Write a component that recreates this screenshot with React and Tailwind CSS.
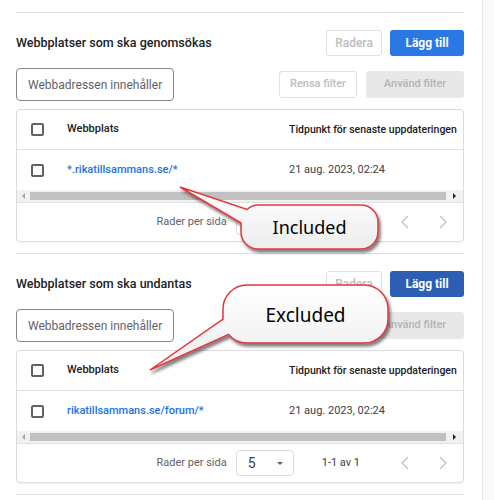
import React from "react";

const ROWS_INCLUDED = [{ url: "*.rikatillsammans.se/*", updated: "21 aug. 2023, 02:24" }];
const ROWS_EXCLUDED = [{ url: "rikatillsammans.se/forum/*", updated: "21 aug. 2023, 02:24" }];

function Checkbox() {
    return <div className="w-[13px] h-[13px] border-2 border-[#5f6368] rounded-[2px] bg-white" />;
}

function Chevron({ dir }) {
    return (
        <svg width="10" height="14" viewBox="0 0 10 14" fill="none" stroke="#bdc1c6" strokeWidth="1.3">
            {dir === "left" ? <path d="M8 1 L2 7 L8 13" /> : <path d="M2 1 L8 7 L2 13" />}
        </svg>
    );
}

function ScrollBar() {
    return (
        <div className="flex h-[12px] bg-[#f1f1f1]">
            <div className="w-[13px] flex items-center justify-center">
                <div className="w-0 h-0 border-y-[3px] border-y-transparent border-r-[3px] border-r-[#a3a3a3]" />
            </div>
            <div className="flex-1 my-[2px] bg-[#c1c1c1]" />
            <div className="w-[17px] flex items-center justify-center">
                <div className="w-0 h-0 border-y-[3px] border-y-transparent border-l-[3px] border-l-[#202124]" />
            </div>
        </div>
    );
}

function SiteTable({ rows }) {
    return (
        <div className="mt-2 border border-[#dadce0] rounded-[4px] shadow-[0_1px_2px_rgba(0,0,0,0.05)] overflow-hidden bg-white">
            {/* Header */}
            <div className="flex items-center h-[40px] border-b border-[#e0e0e0] text-[10.5px] font-medium text-[#202124]">
                <div className="w-[50px] pl-[14px]"><Checkbox /></div>
                <div className="w-[222px] text-[11px]">Webbplats</div>
                <div className="flex-1 whitespace-nowrap">Tidpunkt för senaste uppdateringen</div>
            </div>

            {/* Rows */}
            {rows.map((row) => (
                <div key={row.url} className="flex items-center h-[40px] text-[11px]">
                    <div className="w-[50px] pl-[14px]"><Checkbox /></div>
                    <div className="w-[222px] text-[#1a73e8] font-medium">{row.url}</div>
                    <div className="flex-1 text-[#3c4043]">{row.updated}</div>
                </div>
            ))}

            <ScrollBar />

            {/* Pagination */}
            <div className="flex items-center justify-end h-[39px] pr-[15px] border-t border-[#e0e0e0] text-[11px] text-[#5f6368]">
                <span>Rader per sida</span>
                <div className="ml-[9px] w-[58px] h-[26px] flex items-center justify-between pl-[11px] pr-[10px] border border-[#dadce0] rounded-[4px]">
                    <span className="text-[14px] text-[#3c4043]">5</span>
                    <div className="w-0 h-0 border-x-[3px] border-x-transparent border-t-[3px] border-t-[#5f6368]" />
                </div>
                <span className="ml-[28px] text-[#3c4043]">1-1 av 1</span>
                <div className="ml-[40px] flex items-center gap-[28px]">
                    <Chevron dir="left" />
                    <Chevron dir="right" />
                </div>
            </div>
        </div>
    );
}

function SiteSection({ title, rows, addColor }) {
    return (
        <div className="pt-[17px] pb-[11px] border-b border-[#e0e0e0]">
            <div className="flex items-center h-[26px]">
                <h2 className="flex-1 text-[12.5px] font-medium text-[#202124]">{title}</h2>
                <button className="h-[26px] w-[56px] border border-[#e0e0e0] rounded-[3px] text-[12px] font-medium text-[#bdbdbd] bg-white">
                    Radera
                </button>
                <button className={`ml-2 h-[26px] w-[74px] rounded-[3px] text-[12px] font-bold text-white ${addColor}`}>
                    Lägg till
                </button>
            </div>

            {/* Filter */}
            <div className="mt-3 flex items-center h-[33px]">
                <div className="w-[158px] h-[33px] flex items-center pl-[11px] border border-[#80868b] rounded-[4px] text-[12px] text-[#5f6368] whitespace-nowrap">
                    Webbadressen innehåller
                </div>
                <div className="flex-1" />
                <button className="w-[78px] h-[27px] border border-[#e0e0e0] rounded-[3px] text-[11px] font-medium text-[#bdbdbd] bg-white">
                    Rensa filter
                </button>
                <button className="ml-[9px] w-[98px] h-[27px] rounded-[3px] text-[11px] font-medium text-[#b3b3b3] bg-[#e8e8e8]">
                    Använd filter
                </button>
            </div>

            <SiteTable rows={rows} />
        </div>
    );
}

function Callouts() {
    return (
        <>
            <svg className="absolute inset-0 pointer-events-none" width="494" height="500">
                <defs>
                    <linearGradient id="bubbleFill" x1="0" y1="0" x2="0" y2="1">
                        <stop offset="0" stopColor="#ffffff" />
                        <stop offset="1" stopColor="#ededed" />
                    </linearGradient>
                    <filter id="bubbleShadow" x="-20%" y="-20%" width="140%" height="160%">
                        <feDropShadow dx="2" dy="3" stdDeviation="1.6" floodColor="#000" floodOpacity="0.5" />
                    </filter>
                </defs>
                <path
                    d="M258 205 H361 A17 17 0 0 1 378 222 V232 A17 17 0 0 1 361 249 H258 A17 17 0 0 1 241 232 V223 L180 187 L247 209.5 A17 17 0 0 1 258 205 Z"
                    fill="url(#bubbleFill)"
                    stroke="#e4363c"
                    strokeWidth="1.5"
                    filter="url(#bubbleShadow)"
                />
                <path
                    d="M247 285 H364 A24 24 0 0 1 388 309 V319 A24 24 0 0 1 364 343 H247 A24 24 0 0 1 228.6 334.4 L150 370 L223 319 V309 A24 24 0 0 1 247 285 Z"
                    fill="url(#bubbleFill)"
                    stroke="#e4363c"
                    strokeWidth="1.5"
                    filter="url(#bubbleShadow)"
                />
            </svg>
            <div className="absolute left-[241px] top-[205px] w-[137px] h-[44px] flex items-center justify-center font-['Noto_Sans',sans-serif] text-[18px] text-black">
                Included
            </div>
            <div className="absolute left-[223px] top-[286px] w-[165px] h-[58px] flex items-center justify-center font-['Noto_Sans',sans-serif] text-[19px] text-black">
                Excluded
            </div>
        </>
    );
}

export default function App() {
    return (
        <div className="relative flex w-[494px] h-[500px] overflow-hidden bg-white font-['Roboto',sans-serif]">
            <div className="w-[482px] pl-4 pr-[18px]">
                <div className="h-[13px] border-b border-[#e0e0e0]" />
                <SiteSection title="Webbplatser som ska genomsökas" rows={ROWS_INCLUDED} addColor="bg-[#2a78e4]" />
                <SiteSection title="Webbplatser som ska undantas" rows={ROWS_EXCLUDED} addColor="bg-[#2c5fb4]" />
            </div>
            <div className="flex-1 bg-[#f8f9fa] border-l border-[#e8e8ea]" />
            <Callouts />
        </div>
    );
}
